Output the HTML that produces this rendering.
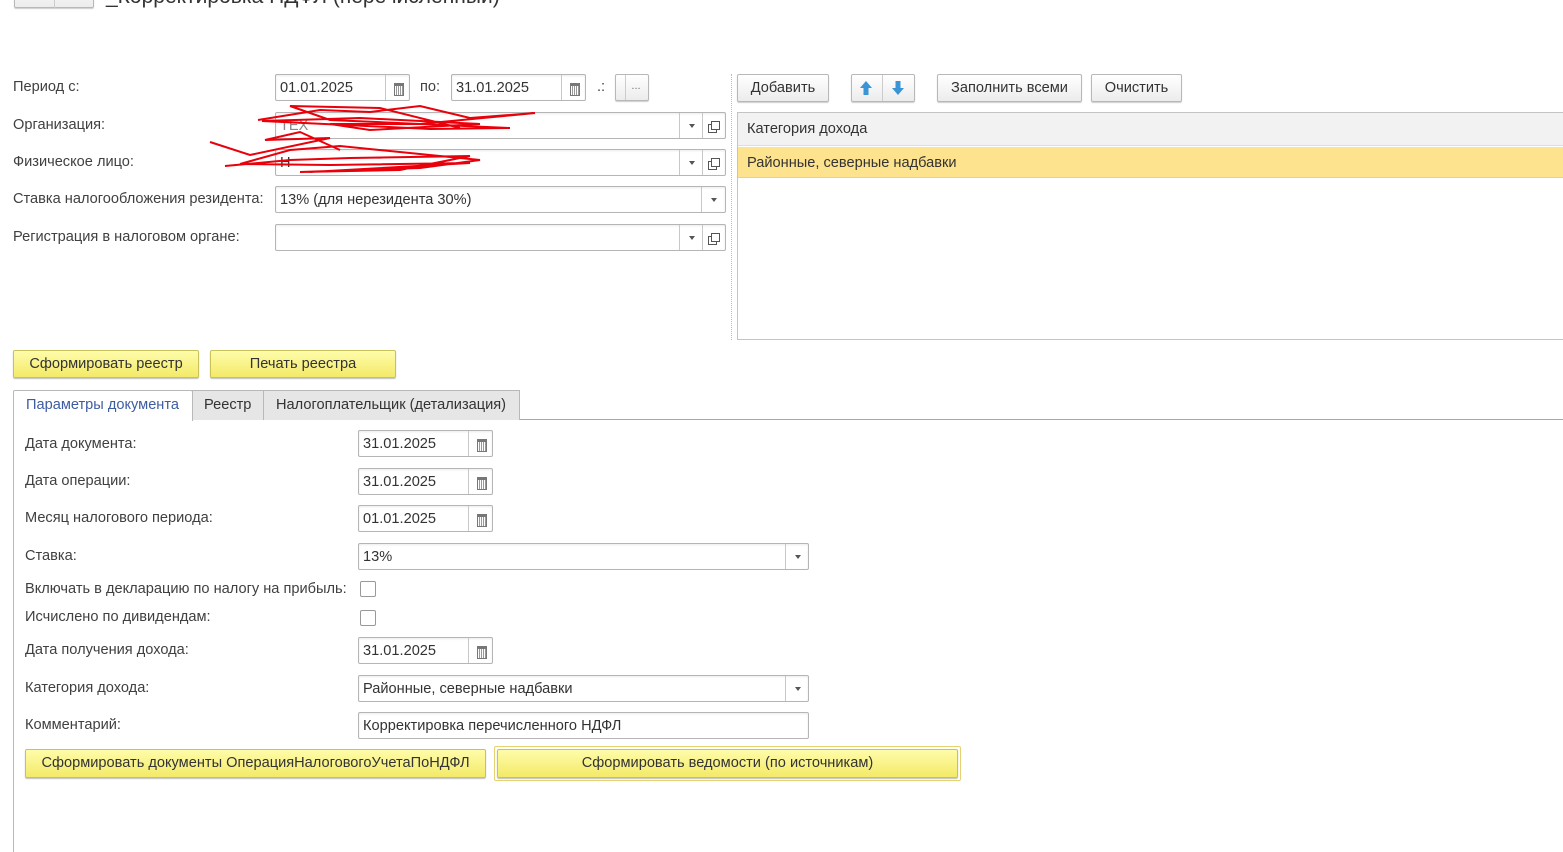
<!DOCTYPE html>
<html><head><meta charset="utf-8"><style>
*{box-sizing:border-box}
body{margin:0;width:1563px;height:852px;overflow:hidden;background:#fff;font-family:"Liberation Sans",Arial,sans-serif;font-size:14.6px;color:#404040;position:relative}
.a{position:absolute}
.lbl{position:absolute;line-height:16px;white-space:nowrap}
.inp{position:absolute;border:1px solid #b5b5b5;border-radius:2px;background:#fff;box-shadow:inset 0 1px 2px rgba(0,0,0,.08);height:27px}
.inp .t{position:absolute;left:4px;top:5px;white-space:nowrap;color:#333}
.btnp{position:absolute;top:0;bottom:0;border-left:1px solid #c8c8c8;width:24px}
.cal::after{content:"";position:absolute;left:8px;top:8px;width:8px;height:9px;border:1px solid #777;border-top-width:3px;background:repeating-linear-gradient(90deg,#fff 0 1px,#999 1px 2px)}
.dd::after{content:"";position:absolute;left:9px;top:11px;border:3px solid transparent;border-top:4px solid #555;border-bottom:0}
.op::after{content:"";position:absolute;left:8px;top:8px;width:7px;height:7px;border:1px solid #555;box-shadow:-3px 3px 0 -1px #fff,-3px 3px 0 0 #555}
.btn{position:absolute;border:1px solid #b8b8b8;border-radius:2px;background:linear-gradient(#fff,#ececec);box-shadow:0 1px 1px rgba(0,0,0,.2);text-align:center;line-height:26px;color:#333;white-space:nowrap}
.ybtn{position:absolute;border:1px solid #c9c25a;border-radius:2px;background:linear-gradient(#fffcaa,#f3ea68);box-shadow:0 1px 1px rgba(0,0,0,.25);text-align:center;line-height:26px;color:#333;white-space:nowrap}
.chk{position:absolute;width:16px;height:16px;border:1px solid #999;border-radius:2px;background:#fff}
</style></head><body>
<div class="btn" style="left:14px;top:-20px;width:80px;height:28px"></div>
<div class="a" style="left:54px;top:-20px;width:1px;height:28px;background:#ccc"></div>
<div class="lbl" style="left:106px;top:-14px;font-size:21px;line-height:22px;color:#333">_Корректировка НДФЛ (перечисленный)</div>

<div class="lbl" style="left:13px;top:79px">Период с:</div>
<div class="inp" style="left:275px;top:74px;width:135px"><span class="t">01.01.2025</span><div class="btnp cal" style="right:0"></div></div>
<div class="lbl" style="left:420px;top:79px">по:</div>
<div class="inp" style="left:451px;top:74px;width:135px"><span class="t">31.01.2025</span><div class="btnp cal" style="right:0"></div></div>
<div class="lbl" style="left:597px;top:79px">.:</div>
<div class="btn" style="left:615px;top:74px;width:34px;height:27px;line-height:22px;font-size:11px;color:#777;padding-left:8px">...</div>
<div class="a" style="left:625px;top:75px;width:1px;height:25px;background:#ccc"></div>

<div class="lbl" style="left:13px;top:117px">Организация:</div>
<div class="inp" style="left:275px;top:112px;width:451px"><span class="t" style="color:#888">ТЕХ</span><div class="btnp dd" style="right:23px;width:23px"></div><div class="btnp op" style="right:0;width:23px"></div></div>
<div class="lbl" style="left:13px;top:154px">Физическое лицо:</div>
<div class="inp" style="left:275px;top:149px;width:451px"><span class="t">Н</span><div class="btnp dd" style="right:23px;width:23px"></div><div class="btnp op" style="right:0;width:23px"></div></div>
<div class="lbl" style="left:13px;top:191px">Ставка налогообложения резидента:</div>
<div class="inp" style="left:275px;top:186px;width:451px"><span class="t">13% (для нерезидента 30%)</span><div class="btnp dd" style="right:0"></div></div>
<div class="lbl" style="left:13px;top:229px">Регистрация в налоговом органе:</div>
<div class="inp" style="left:275px;top:224px;width:451px"><div class="btnp dd" style="right:23px;width:23px"></div><div class="btnp op" style="right:0;width:23px"></div></div>

<svg class="a" style="left:0;top:0" width="740" height="260"><g fill="none" stroke="#e8000b" stroke-width="2">
<polyline points="258,120 320,110 370,112 420,106 470,118 535,113 420,124 330,124 370,130 480,124 360,118 262,121 430,129 510,128 330,120 290,106 380,108 460,128"/>
<polyline points="225,166 290,160 350,158 470,156 400,170 300,172 420,168 480,160 340,146 290,150 240,164 330,165 470,163 310,172"/>
<polyline points="210,142 250,155 330,138 265,140 300,132 340,150"/>
</g></svg>

<div class="a" style="left:731px;top:74px;height:266px;border-left:1px dotted #bbb"></div>
<div class="btn" style="left:737px;top:74px;width:92px;height:28px">Добавить</div>
<div class="btn" style="left:851px;top:74px;width:64px;height:28px"></div>
<div class="a" style="left:882px;top:75px;width:1px;height:26px;background:#ccc"></div>
<svg class="a" style="left:858px;top:80px" width="52" height="16"><path d="M8 1 L14 8 H10.5 V15 H5.5 V8 H2 Z" fill="#3a95d6"/><path d="M40 15 L46 8 H42.5 V1 H37.5 V8 H34 Z" fill="#3a95d6"/></svg>
<div class="btn" style="left:937px;top:74px;width:145px;height:28px">Заполнить всеми</div>
<div class="btn" style="left:1091px;top:74px;width:91px;height:28px">Очистить</div>

<div class="a" style="left:737px;top:112px;width:830px;height:228px;border:1px solid #c4c4c4;background:#fff"></div>
<div class="a" style="left:738px;top:113px;width:830px;height:33px;background:#f2f2f2;border-bottom:1px solid #ddd"></div>
<div class="lbl" style="left:747px;top:121px;color:#333">Категория дохода</div>
<div class="a" style="left:738px;top:147px;width:830px;height:31px;background:#fde38d;border-bottom:1px solid #e0d2a0"></div>
<div class="lbl" style="left:747px;top:155px;color:#333">Районные, северные надбавки</div>

<div class="ybtn" style="left:13px;top:350px;width:186px;height:28px">Сформировать реестр</div>
<div class="ybtn" style="left:210px;top:350px;width:186px;height:28px">Печать реестра</div>

<div class="a" style="left:192px;top:419px;width:1371px;height:1px;background:#a8a8a8"></div>
<div class="a" style="left:13px;top:390px;width:180px;height:31px;background:#fff;border:1px solid #b8b8b8;border-bottom:none;border-radius:2px 2px 0 0"></div>
<div class="lbl" style="left:26px;top:397px;color:#3e5da0">Параметры документа</div>
<div class="a" style="left:192px;top:390px;width:72px;height:30px;background:#e6e6e6;border:1px solid #b8b8b8;border-bottom:none"></div>
<div class="lbl" style="left:204px;top:397px;color:#333">Реестр</div>
<div class="a" style="left:263px;top:390px;width:257px;height:30px;background:#e6e6e6;border:1px solid #b8b8b8;border-bottom:none"></div>
<div class="lbl" style="left:276px;top:397px;color:#333">Налогоплательщик (детализация)</div>
<div class="a" style="left:13px;top:420px;width:1px;height:432px;background:#b8b8b8"></div>

<div class="lbl" style="left:25px;top:436px">Дата документа:</div>
<div class="inp" style="left:358px;top:430px;width:135px"><span class="t">31.01.2025</span><div class="btnp cal" style="right:0"></div></div>
<div class="lbl" style="left:25px;top:473px">Дата операции:</div>
<div class="inp" style="left:358px;top:468px;width:135px"><span class="t">31.01.2025</span><div class="btnp cal" style="right:0"></div></div>
<div class="lbl" style="left:25px;top:510px">Месяц налогового периода:</div>
<div class="inp" style="left:358px;top:505px;width:135px"><span class="t">01.01.2025</span><div class="btnp cal" style="right:0"></div></div>
<div class="lbl" style="left:25px;top:548px">Ставка:</div>
<div class="inp" style="left:358px;top:543px;width:451px"><span class="t">13%</span><div class="btnp dd" style="right:0;width:23px"></div></div>
<div class="lbl" style="left:25px;top:581px">Включать в декларацию по налогу на прибыль:</div>
<div class="chk" style="left:360px;top:581px"></div>
<div class="lbl" style="left:25px;top:609px">Исчислено по дивидендам:</div>
<div class="chk" style="left:360px;top:610px"></div>
<div class="lbl" style="left:25px;top:642px">Дата получения дохода:</div>
<div class="inp" style="left:358px;top:637px;width:135px"><span class="t">31.01.2025</span><div class="btnp cal" style="right:0"></div></div>
<div class="lbl" style="left:25px;top:680px">Категория дохода:</div>
<div class="inp" style="left:358px;top:675px;width:451px"><span class="t">Районные, северные надбавки</span><div class="btnp dd" style="right:0;width:23px"></div></div>
<div class="lbl" style="left:25px;top:717px">Комментарий:</div>
<div class="inp" style="left:358px;top:712px;width:451px"><span class="t">Корректировка перечисленного НДФЛ</span></div>

<div class="ybtn" style="left:25px;top:749px;width:461px;height:29px">Сформировать документы ОперацияНалоговогоУчетаПоНДФЛ</div>
<div class="a" style="left:494px;top:746px;width:467px;height:35px;border:1px solid #e6d270;border-radius:2px"></div>
<div class="ybtn" style="left:497px;top:749px;width:461px;height:29px">Сформировать ведомости (по источникам)</div>
</body></html>
